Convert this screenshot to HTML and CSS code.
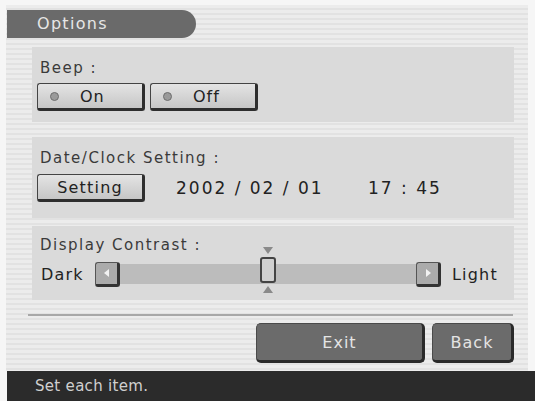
FILE: index.html
```html
<!DOCTYPE html>
<html>
<head>
<meta charset="utf-8">
<link rel="stylesheet" href="styles.css">
</head>
<body>
<div class="screen">
  <div class="main">
    <div class="tab">Options</div>
    <div class="panel beep">
      <div class="label">Beep :</div>
      <div class="row">
        <div class="btn toggle"><span class="led"></span><span class="btxt">On</span></div>
        <div class="btn toggle"><span class="led"></span><span class="btxt">Off</span></div>
      </div>
    </div>
    <div class="panel date">
      <div class="label">Date/Clock Setting :</div>
      <div class="row">
        <div class="btn setting">Setting</div>
        <div class="datetime">2002 / 02 / 01      17 : 45</div>
      </div>
    </div>
    <div class="panel contrast">
      <div class="label">Display Contrast :</div>
      <div class="row slider-row">
        <span class="end-label">Dark</span>
        <div class="arrow left"><svg width="12" height="12" viewBox="0 0 12 12"><polygon points="8,2 3,6 8,10" fill="#f2f2f2"/></svg></div>
        <div class="track">
          <div class="thumb-wrap">
            <div class="tri down"></div>
            <div class="thumb"></div>
            <div class="tri up"></div>
          </div>
        </div>
        <div class="arrow right"><svg width="12" height="12" viewBox="0 0 12 12"><polygon points="4,2 9,6 4,10" fill="#f2f2f2"/></svg></div>
        <span class="end-label light">Light</span>
      </div>
    </div>
    <div class="sep"></div>
    <div class="actions">
      <div class="abtn exit">Exit</div>
      <div class="abtn back">Back</div>
    </div>
  </div>
  <div class="status">Set each item.</div>
</div>
</body>
</html>
```

FILE: styles.css
```css
html, body {
  margin: 0;
  padding: 0;
  background: #f6f6f6;
  font-family: "DejaVu Sans", "Liberation Sans", sans-serif;
}
.screen {
  width: 535px;
  height: 401px;
  padding: 5px 0 0 6px;
  box-sizing: border-box;
  display: flex;
  flex-direction: column;
}
.main {
  width: 522px;
  height: 366px;
  box-sizing: border-box;
  padding-top: 5px;
  background: repeating-linear-gradient(to bottom, #ececec 0px, #ececec 3px, #e2e2e2 3px, #e2e2e2 5px);
}
.tab {
  width: 189px;
  height: 28px;
  box-sizing: border-box;
  margin-left: 1px;
  padding-left: 30px;
  background: #6a6a6a;
  border-radius: 0 14px 14px 0;
  color: #e6e6e6;
  font-size: 16px;
  line-height: 28px;
  letter-spacing: 1.3px;
}
.panel {
  margin-left: 26px;
  width: 482px;
  box-sizing: border-box;
  background: #dadada;
  padding: 13px 0 0 8px;
}
.label {
  font-size: 15px;
  color: #3a3a3a;
  line-height: 17px;
  letter-spacing: 1.5px;
}
.row {
  display: flex;
  align-items: center;
}
.beep {
  margin-top: 9px;
  height: 75px;
}
.beep .row {
  margin-top: 6px;
  gap: 5px;
  margin-left: -3px;
}
.btn {
  height: 28px;
  box-sizing: border-box;
  border: 1px solid #444;
  border-right: 3px solid #2e2e2e;
  border-bottom: 3px solid #2e2e2e;
  border-radius: 3px;
  background: linear-gradient(#e4e4e4, #c6c6c6);
  color: #222;
  font-size: 16px;
  display: flex;
  align-items: center;
}
.toggle {
  width: 108px;
  padding-left: 12px;
}
.led {
  width: 9px;
  height: 9px;
  border-radius: 50%;
  background: #9a9a9a;
  border: 1px solid #6e6e6e;
  box-sizing: border-box;
}
.btxt {
  margin-left: 21px;
  letter-spacing: 1px;
}
.date {
  margin-top: 15px;
  height: 81px;
}
.date .row {
  margin-top: 7px;
  margin-left: -3px;
}
.setting {
  width: 108px;
  justify-content: center;
  letter-spacing: 1.2px;
}
.datetime {
  margin-left: 31px;
  font-size: 17px;
  color: #222;
  letter-spacing: 2px;
  white-space: pre;
}
.contrast {
  margin-top: 8px;
  height: 74px;
  padding-top: 11px;
}
.slider-row {
  margin-top: 8px;
  height: 24px;
}
.end-label {
  font-size: 16px;
  color: #222;
  width: 55px;
  padding-left: 1px;
  box-sizing: border-box;
  letter-spacing: 1.2px;
}
.end-label.light {
  width: auto;
  margin-left: 10px;
}
.arrow {
  width: 25px;
  height: 25px;
  box-sizing: border-box;
  border: 1px solid #555;
  border-right: 3px solid #333;
  border-bottom: 3px solid #333;
  border-radius: 3px;
  background: #ababab;
  display: flex;
  align-items: center;
  justify-content: center;
}
.track {
  width: 296px;
  height: 20px;
  background: #bcbcbc;
  position: relative;
}
.thumb-wrap {
  position: absolute;
  left: 139px;
  top: -17px;
  width: 17px;
  display: flex;
  flex-direction: column;
  align-items: center;
}
.thumb {
  width: 16px;
  height: 26px;
  box-sizing: border-box;
  border: 2px solid #444;
  border-radius: 3px;
  background: #d0d0d0;
  margin: 3px 0;
}
.tri {
  width: 0;
  height: 0;
  border-left: 5px solid transparent;
  border-right: 5px solid transparent;
}
.tri.down {
  border-top: 7px solid #8a8a8a;
}
.tri.up {
  border-bottom: 7px solid #8a8a8a;
}
.sep {
  margin: 14px 0 0 22px;
  width: 485px;
  height: 2px;
  background: #a8a8a8;
}
.actions {
  display: flex;
  gap: 7px;
  margin: 7px 0 0 250px;
}
.abtn {
  height: 40px;
  box-sizing: border-box;
  background: #6b6b6b;
  border: 1px solid #4a4a4a;
  border-right: 3px solid #2a2a2a;
  border-bottom: 3px solid #2a2a2a;
  border-radius: 5px;
  color: #e4e4e4;
  font-size: 16px;
  letter-spacing: 1px;
  display: flex;
  align-items: center;
  justify-content: center;
}
.exit {
  width: 169px;
}
.back {
  width: 82px;
}
.status {
  height: 30px;
  width: 529px;
  margin-left: 1px;
  background: #2b2b2b;
  color: #d0d0d0;
  font-size: 15px;
  line-height: 30px;
  padding-left: 28px;
  box-sizing: border-box;
  letter-spacing: 0.3px;
}
```
